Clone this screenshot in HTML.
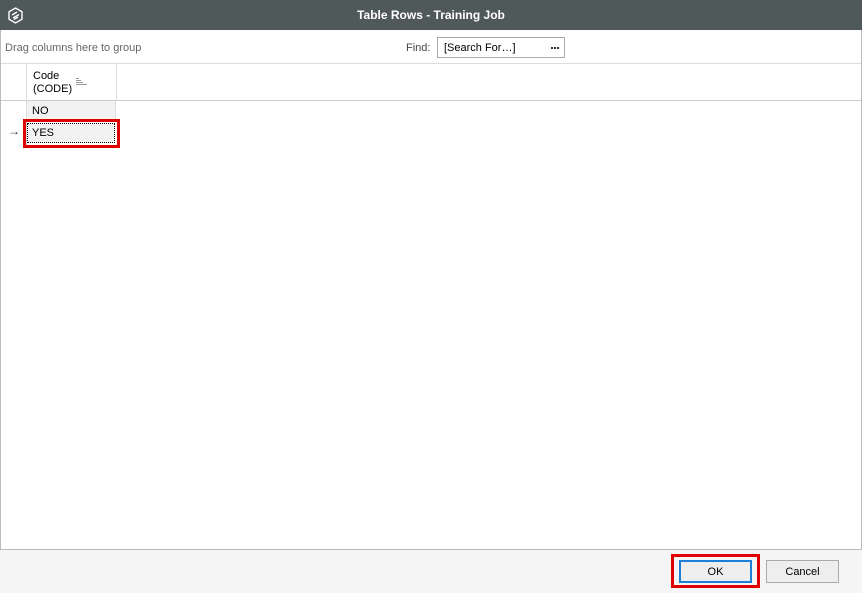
<!DOCTYPE html>
<html><head><style>
*{box-sizing:border-box;margin:0;padding:0}
body{width:862px;height:593px;background:#fff;font-family:"Liberation Sans",Tahoma,sans-serif;font-size:11px;color:#000;position:relative;overflow:hidden}
.a{position:absolute}
</style></head><body>
<div class="a" style="left:0;top:0;width:862px;height:30px;background:#4f5959"></div>
<svg class="a" style="left:7px;top:7px" width="17" height="17" viewBox="0 0 17 17"><path d="M8.5 1 L15 4.75 V12.25 L8.5 16 L2 12.25 V4.75 Z" fill="none" stroke="#fff" stroke-width="1.4"/><path d="M5 8 L10 5 M6 11 L12 7.5 M7 12.5 L11 10" stroke="#fff" stroke-width="1.4"/></svg>
<div class="a" style="left:0;top:8px;width:862px;text-align:center;color:#fff;font-weight:bold;font-size:12px">Table Rows - Training Job</div>
<div class="a" style="left:0;top:30px;width:1px;height:520px;background:#bbb"></div>
<div class="a" style="right:0;top:30px;width:1px;height:520px;background:#bbb"></div>
<div class="a" style="left:5px;top:42px;color:#666">Drag columns here to group</div>
<div class="a" style="left:406px;top:42px;color:#444">Find:</div>
<div class="a" style="left:437px;top:37px;width:128px;height:21px;border:1px solid #aaa;padding:4px 0 0 6px;color:#000">[Search For…]</div>
<div class="a" style="left:551px;top:47px;width:2px;height:2px;background:#333;box-shadow:3px 0 0 #333,6px 0 0 #333"></div>
<div class="a" style="left:1px;top:63px;width:860px;height:1px;background:#ddd"></div>
<div class="a" style="left:1px;top:64px;width:860px;height:37px;background:#fff;border-bottom:1px solid #ccc"></div>
<div class="a" style="left:26px;top:64px;width:1px;height:82px;background:#ddd"></div>
<div class="a" style="left:116px;top:64px;width:1px;height:37px;background:#ddd"></div>
<div class="a" style="left:33px;top:70px;line-height:13px">Code<br>(CODE)</div>
<div class="a" style="left:76px;top:78px;width:3px;height:1px;background:#999"></div>
<div class="a" style="left:76px;top:80px;width:5px;height:1px;background:#999"></div>
<div class="a" style="left:76px;top:82px;width:7px;height:1px;background:#999"></div>
<div class="a" style="left:76px;top:84px;width:11px;height:1px;background:#999"></div>
<div class="a" style="left:27px;top:101px;width:89px;height:19px;background:#f2f2f2;border-bottom:1px solid #ddd;border-right:1px solid #ddd;padding:4px 0 0 5px">NO</div>
<div class="a" style="left:23px;top:119px;width:97px;height:29px;border:3px solid #e00000"></div>
<div class="a" style="left:27px;top:123px;width:88px;height:20px;background:#f2f2f2;border:1px dotted #000;padding:3px 0 0 4px">YES</div>
<div class="a" style="left:8px;top:124px;color:#333;font-size:12px">→</div>
<div class="a" style="left:0;top:549px;width:862px;height:44px;background:#f5f5f5;border-top:1px solid #bbb"></div>
<div class="a" style="left:671px;top:554px;width:89px;height:34px;border:3px solid #e00000"></div>
<div class="a" style="left:679px;top:560px;width:73px;height:23px;border:2px solid #1e7fd6;background:#eee;text-align:center;padding-top:4px">OK</div>
<div class="a" style="left:766px;top:560px;width:73px;height:23px;border:1px solid #aaa;background:#eee;text-align:center;padding-top:5px">Cancel</div>
</body></html>
